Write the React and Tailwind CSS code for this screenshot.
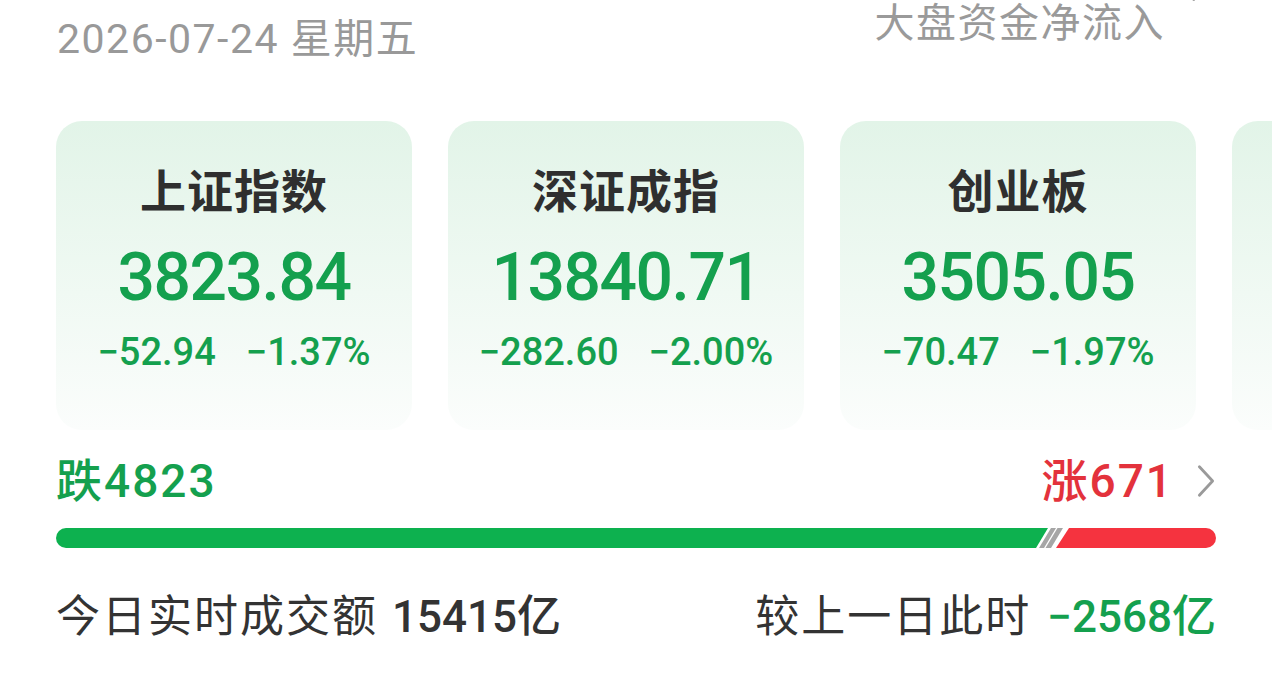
import React from 'react';

const indices = [
  { name: '上证指数', value: '3823.84', change: '−52.94', pct: '−1.37%' },
  { name: '深证成指', value: '13840.71', change: '−282.60', pct: '−2.00%' },
  { name: '创业板', value: '3505.05', change: '−70.47', pct: '−1.97%' },
];

const numFont = { fontFamily: 'Roboto, "Noto Sans CJK SC", sans-serif' };

const IndexCard = ({ item }) => (
  <div className="w-[356px] h-[309px] shrink-0 rounded-[26px] bg-gradient-to-b from-[#e2f4e8] to-[#fbfdfc] flex flex-col items-center pt-[48px]">
    <div className="text-[46px] leading-none font-semibold text-[#2f2f2f] tracking-[1px]">{item.name}</div>
    <div className="mt-[30px] text-[66px] leading-none font-medium text-[#14a04e] tracking-[-1.5px]" style={numFont}>
      {item.value}
    </div>
    <div className="mt-[22px] flex gap-[30px] text-[38px] leading-none font-medium text-[#14a04e]" style={numFont}>
      <span>{item.change}</span>
      <span>{item.pct}</span>
    </div>
  </div>
);

const Chevron = ({ className }) => (
  <svg className={className} viewBox="0 0 20 36" fill="none" stroke="currentColor" strokeWidth="3" strokeLinecap="round" strokeLinejoin="round">
    <path d="M3 3l14 15L3 33" />
  </svg>
);

const BreadthBar = () => (
  <div className="flex h-[20px] w-full">
    <div className="flex-1 bg-[#0db14f] rounded-l-full" />
    <svg width="33" height="20" viewBox="0 0 33 20" className="shrink-0">
      <polygon points="0,0 12,0 0,20" fill="#0db14f" />
      <polygon points="15,0 20,0 8,20 3,20" fill="#a6a6a6" />
      <polygon points="21.5,0 27,0 15,20 9.5,20" fill="#a6a6a6" />
      <polygon points="33,0 33,20 20,20" fill="#f5333f" />
    </svg>
    <div className="w-[147px] bg-[#f5333f] rounded-r-full" />
  </div>
);

export default function App() {
  return (
    <div
      className="w-[1272px] h-[690px] overflow-hidden bg-white"
      style={{ fontFamily: 'Roboto, "Noto Sans CJK SC", sans-serif' }}
    >
      <div className="flex justify-between pl-[57px] pr-[63px]">
        <div className="pt-[19px] text-[41px] leading-none text-[#999999] tracking-[1.5px]">2026-07-24 星期五</div>
        <div className="flex items-start">
          <div className="pt-[4px] text-[40px] leading-none text-[#9a9a9a] tracking-[1.5px]">大盘资金净流入</div>
          <Chevron className="ml-[26px] -mt-[32px] w-[18px] h-[36px] text-[#9a9a9a]" />
        </div>
      </div>

      <div className="mt-[61px] flex gap-[36px] pl-[56px]">
        {indices.map((item) => (
          <IndexCard key={item.name} item={item} />
        ))}
        {/* next card peeking in from the carousel */}
        <div className="w-[356px] h-[309px] shrink-0 rounded-[26px] bg-gradient-to-b from-[#e2f4e8] to-[#fbfdfc]" />
      </div>

      <div className="px-[56px]">
        <div className="mt-[28px] flex items-center justify-between">
          <div className="text-[46px] leading-none font-medium text-[#14a04e] tracking-[2px]">跌4823</div>
          <div className="flex items-center">
            <span className="text-[46px] leading-none font-medium text-[#e3323c] tracking-[2px]">涨671</span>
            <Chevron className="ml-[22px] w-[20px] h-[34px] text-[#9a9a9a]" />
          </div>
        </div>

        <div className="mt-[24px]">
          <BreadthBar />
        </div>

        <div className="mt-[47px] flex items-center justify-between text-[44px] leading-none text-[#333333]">
          <div className="flex items-center">
            <span className="tracking-[2px]">今日实时成交额</span>
            <span className="ml-[14px] font-medium">15415亿</span>
          </div>
          <div className="flex items-center">
            <span className="tracking-[2px]">较上一日此时</span>
            <span className="ml-[16px] font-medium text-[#14a04e]">−2568亿</span>
          </div>
        </div>
      </div>
    </div>
  );
}
